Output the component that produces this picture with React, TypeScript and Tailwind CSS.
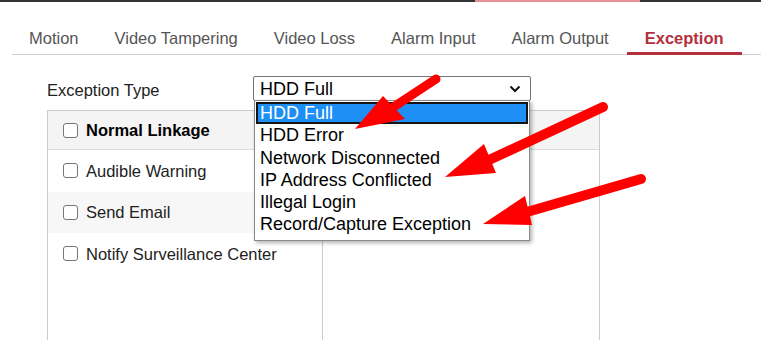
import React from "react";

const tabs = ["Motion", "Video Tampering", "Video Loss", "Alarm Input", "Alarm Output", "Exception"];
const options = [
  "HDD Full",
  "HDD Error",
  "Network Disconnected",
  "IP Address Conflicted",
  "Illegal Login",
  "Record/Capture Exception",
];

function Box() {
  return <span className="inline-block w-[15px] h-[15px] border border-[#767676] rounded-[3px] bg-white shrink-0" />;
}

export default function App() {
  return (
    <div className="relative w-[761px] h-[340px] overflow-hidden bg-white font-['Liberation_Sans',Arial,sans-serif]">
      <div className="flex h-[2px]">
        <div className="w-[475px] bg-[#333]" />
        <div className="w-[165px] bg-[#e8909a]" />
        <div className="flex-1 bg-[#333]" />
      </div>

      <div className="ml-[12px] border-b border-[#cfcfcf]">
        <div className="flex ml-[-1px]">
          {tabs.map((t) => {
            const active = t === "Exception";
            return (
              <div
                key={t}
                className={
                  "px-[18px] pt-[27px] pb-[5px] text-[16.5px] leading-[18px] border-b-[3px] mb-[-1px] " +
                  (active ? "border-[#b3303c] text-[#b3303c] font-bold" : "border-transparent text-[#555]")
                }
              >
                {t}
              </div>
            );
          })}
        </div>
      </div>

      <div className="pl-[47px]">
        <div className="mt-[21px] flex items-center">
          <div className="w-[206px] pt-[3px] text-[16.5px] text-[#222] leading-[18px]">Exception Type</div>
          <div className="relative">
            <div className="w-[278px] h-[25px] border border-[#767676] rounded-[2px] bg-white flex items-center pl-[6px] pr-[8px] text-[18px] text-black leading-[20px]">
              <span className="flex-1">HDD Full</span>
              <svg width="12" height="8" viewBox="0 0 12 8" className="mr-[1px]">
                <path d="M1.5 1.5 L6 6 L10.5 1.5" fill="none" stroke="#111" strokeWidth="2" />
              </svg>
            </div>
            <div className="absolute z-10 left-[1px] top-[24px] w-[276px] border border-[#8a8a8a] bg-white pt-[1px] pb-[4px] px-[1px] shadow-[2px_2px_4px_rgba(0,0,0,0.3)]">
              {options.map((o, i) => (
                <div
                  key={o}
                  className={
                    "h-[22.3px] leading-[19px] text-[18px] " +
                    (i === 0 ? "bg-[#1e8ff5] text-white border-2 border-[#141414] pl-[2px]" : "text-black pt-[2px] pl-[4px]")
                  }
                >
                  {o}
                </div>
              ))}
            </div>
          </div>
        </div>

        <div className="mt-[9px] w-[553px] h-[300px] border border-[#cccccc]">
          <div className="h-[39px] bg-[#f4f4f4] border-b border-[#dcdcdc] flex items-center pl-[15px]">
            <Box />
            <span className="ml-[8px] text-[16.5px] font-bold text-black leading-[18px]">Normal Linkage</span>
          </div>
          <div className="grid grid-cols-[275px_1fr] h-full">
            <div className="border-r border-[#cccccc]">
              {["Audible Warning", "Send Email", "Notify Surveillance Center"].map((r, i) => (
                <div
                  key={r}
                  className={"h-[41.5px] flex items-center pl-[15px] " + (i === 1 ? "bg-[#f7f7f7]" : "")}
                >
                  <Box />
                  <span className="ml-[8px] text-[16.5px] text-[#222] leading-[18px]">{r}</span>
                </div>
              ))}
            </div>
            <div />
          </div>
        </div>
      </div>

      <svg className="absolute inset-0 z-20 pointer-events-none" width="761" height="340" viewBox="0 0 761 340">
        <g fill="#ff0000" stroke="#ff0000" strokeLinecap="round">
          <line x1="436" y1="79" x2="392" y2="108" strokeWidth="9" />
          <polygon points="355,129 383,96 405,119" stroke="none" />
          <line x1="603" y1="107" x2="489" y2="160" strokeWidth="10" />
          <polygon points="445,177 484,144 496,173" stroke="none" />
          <line x1="641" y1="179" x2="527" y2="212" strokeWidth="10" />
          <polygon points="483,224 525,196 532,225" stroke="none" />
        </g>
      </svg>
    </div>
  );
}
